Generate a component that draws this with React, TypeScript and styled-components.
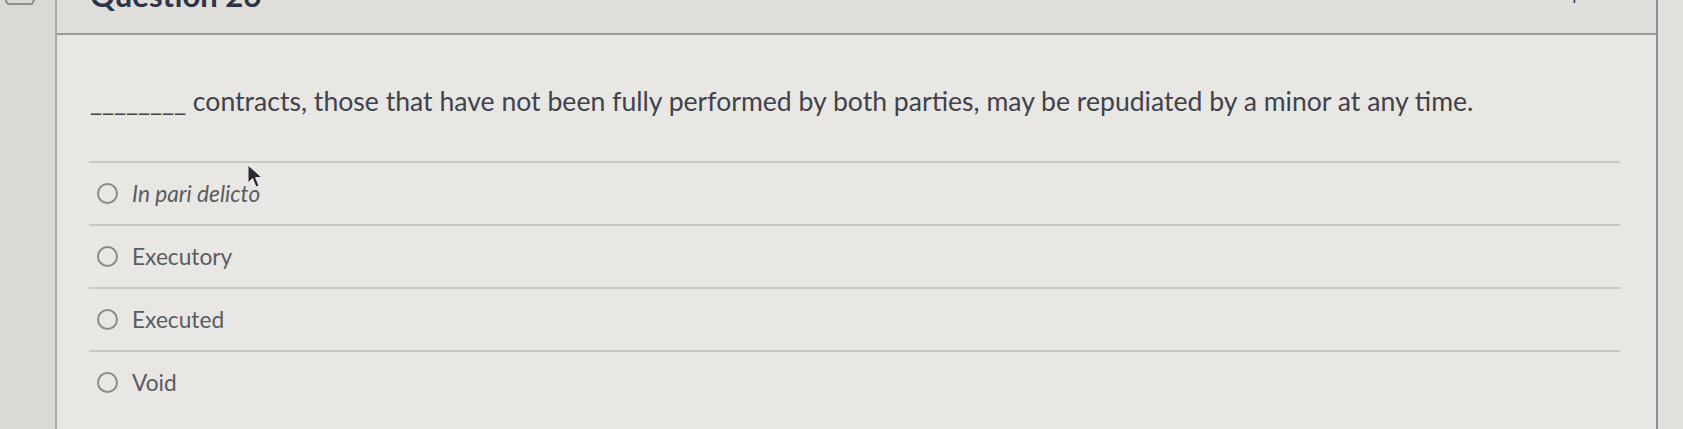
import React from 'react'
import styled, { createGlobalStyle } from 'styled-components'

//GLOBAL
const Global = createGlobalStyle`
  html, body {
    margin: 0;
    padding: 0;
    background: #e1e0dd;
    font-family: 'Lato', 'Noto Sans', sans-serif;
  }
`

//STYLES
const Page = styled.div`
  display: flex;
  width: 1683px;
  height: 429px;
  overflow: hidden;
  position: relative;
`

const SideRail = styled.div`
  width: 55px;
  flex: none;
  background: #dad9d6;
  border-right: 2px solid #a9a9a8;
  position: relative;
`

const RailIcon = styled.svg`
  position: absolute;
  left: 4px;
  top: -20px;
`

const Panel = styled.div`
  width: 1599px;
  flex: none;
  background: #e8e7e4;
  border-right: 2px solid #8f8f95;
  display: flex;
  flex-direction: column;
`

const Header = styled.div`
  height: 33px;
  flex: none;
  background: #dfdedb;
  border-bottom: 2px solid #9b9a98;
  display: flex;
  align-items: flex-end;
  justify-content: space-between;
  padding: 0 62px 0 33px;
  overflow: hidden;
`

const Title = styled.h2`
  margin: 0 0 22px;
  font-size: 31px;
  line-height: 31px;
  font-weight: 700;
  color: #2d3447;
`

const Points = styled.span`
  margin-bottom: 31px;
  font-size: 16px;
  line-height: 16px;
  color: #2d3447;
`

const Body = styled.div`
  margin: 0 36px 0 32px;
`

const Prompt = styled.p`
  margin: 0;
  padding: 50px 0 44px 1px;
  font-size: 26.6px;
  line-height: 32px;
  color: #41424c;
  border-bottom: 2px solid #c9c8c6;
`

const Blank = styled.span`
  letter-spacing: -0.2px;
`

const Options = styled.ul`
  list-style: none;
  margin: 0;
  padding: 0;
`

const Option = styled.li<{ $last?: boolean }>`
  height: 61px;
  display: flex;
  align-items: center;
  gap: 14px;
  padding-left: 8px;
  border-bottom: ${p => (p.$last ? 'none' : '2px solid #c9c8c6')};
`

const Radio = styled.span`
  width: 17px;
  height: 17px;
  border-radius: 50%;
  border: 2px solid #8b8b8d;
  flex: none;
`

const Label = styled.span<{ $italic?: boolean }>`
  font-size: 22.7px;
  color: #5a5b62;
  font-style: ${p => (p.$italic ? 'italic' : 'normal')};
`

const RightRail = styled.div`
  flex: 1;
  background: #e2e1de;
`

const Cursor = styled.svg`
  position: absolute;
  left: 247px;
  top: 164px;
`

const answers = [
  { text: 'In pari delicto', italic: true },
  { text: 'Executory' },
  { text: 'Executed' },
  { text: 'Void' },
]

//MAIN COMPONENT
export default function App() {
  return (
    <>
      <Global />
      <Page>
        <SideRail>
          <RailIcon width="34" height="26" viewBox="0 0 34 26">
            <path d="M2 2 V20 Q2 24 6 24 H28 L32 16 V2" fill="none" stroke="#8e8e92" strokeWidth="2" />
          </RailIcon>
        </SideRail>

        <Panel>
          <Header>
            <Title>Question 26</Title>
            <Points>1 pts</Points>
          </Header>

          <Body>
            <Prompt>
              <Blank>________</Blank> contracts, those that have not been fully performed by both parties, may be repudiated by a minor at any time.
            </Prompt>

            <Options>
              {answers.map((a, i) => (
                <Option key={a.text} $last={i === answers.length - 1}>
                  <Radio />
                  <Label $italic={a.italic}>{a.text}</Label>
                </Option>
              ))}
            </Options>
          </Body>
        </Panel>

        <RightRail />

        <Cursor width="18" height="26" viewBox="0 0 18 26">
          <path d="M1 1 L1 19 L5.5 14.5 L9 23 L12 21.8 L8.6 13.6 L15 13.6 Z" fill="#2a2a30" stroke="#eeeeee" strokeWidth="1" />
        </Cursor>
      </Page>
    </>
  )
}
